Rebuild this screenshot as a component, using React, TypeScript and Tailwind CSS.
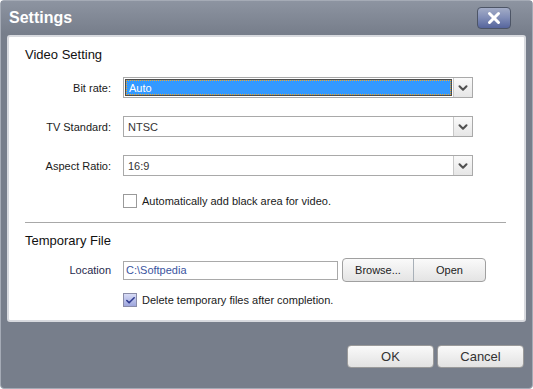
import { ChevronDown, X, Check } from 'lucide-react'

const font = { fontFamily: 'Tahoma, "Liberation Sans", "DejaVu Sans", sans-serif' }

function Combo({ value, focused }: { value: string; focused?: boolean }) {
  return (
    <div className="flex h-[21px] w-[350px] border border-[#a9a9a9] bg-white">
      <div className="flex flex-1 items-center p-[2px]">
        {focused ? (
          <div className="flex h-full w-full items-center border border-dotted border-[#f5a623] bg-[#3399ff] pl-[2px] text-white outline outline-1 outline-black/70">
            {value}
          </div>
        ) : (
          <div className="pl-[2px] text-[#333]">{value}</div>
        )}
      </div>
      <div className="flex w-[19px] items-center justify-center border-l border-[#c8c8c8] bg-gradient-to-b from-[#fafafa] to-[#e6e6e6]">
        <ChevronDown size={14} strokeWidth={3.5} className="text-[#505050]" />
      </div>
    </div>
  )
}

function Row({ label, children }: { label: string; children: React.ReactNode }) {
  return (
    <div className="flex items-center">
      <div className="w-[98px] pr-[12px] text-right text-[#1a1a1a]">{label}</div>
      {children}
    </div>
  )
}

function Box({ checked }: { checked?: boolean }) {
  return checked ? (
    <div className="flex h-[14px] w-[14px] items-center justify-center border border-[#8a8ca8] bg-gradient-to-b from-[#d8dcf6] to-[#9ea6dc]">
      <Check size={11} strokeWidth={3.5} className="text-[#2f3a8f]" />
    </div>
  ) : (
    <div className="h-[14px] w-[14px] border border-[#9a9a9a] bg-white" />
  )
}

export default function App() {
  return (
    <div className="h-[389px] w-[533px] text-[11px] leading-[14px]" style={font}>
      <div className="flex h-full w-full flex-col rounded-[4px] border border-[#a5abb6] bg-[#777e8b]">
        <div className="flex h-[34px] items-center justify-between bg-gradient-to-b from-[#8d94a1] to-[#767d8a] pl-[8px] pr-[21px]">
          <span className="text-[16px] font-bold leading-[20px] text-white">Settings</span>
          <div className="flex h-[22px] w-[34px] items-center justify-center rounded-[4px] border border-[#4d5566] bg-gradient-to-b from-[#a3acc6] via-[#7f8cb6] to-[#56659c]">
            <X size={18} strokeWidth={4} className="text-white" />
          </div>
        </div>
        <div className="mx-[6px] flex h-[287px] flex-col rounded-[3px] border-2 border-[#d8dadf] bg-white px-[16px] pt-[10px]">
          <div className="h-[16px] text-[13px] leading-[16px] text-[#111]">Video Setting</div>
          <div className="mt-[14px] flex flex-col gap-[18px]">
            <Row label="Bit rate:"><Combo value="Auto" focused /></Row>
            <Row label="TV Standard:"><Combo value="NTSC" /></Row>
            <Row label="Aspect Ratio:"><Combo value="16:9" /></Row>
          </div>
          <div className="ml-[98px] mt-[18px] flex h-[14px] items-center gap-[5px] text-[#1a1a1a]">
            <Box />
            <span>Automatically add black area for video.</span>
          </div>
          <div className="mt-[14px] h-px w-[481px] bg-[#a8a8a8]" />
          <div className="mt-[10px] h-[16px] text-[13px] leading-[16px] text-[#111]">Temporary File</div>
          <div className="mt-[9px] flex h-[24px] items-center">
            <div className="w-[98px] pr-[12px] text-right text-[#1f2a4d]">Location</div>
            <div className="flex h-[19px] w-[215px] items-center border border-[#a9a9a9] pl-[2px] text-[#3a55a0]">C:\Softpedia</div>
            <div className="ml-[4px] flex h-[24px] w-[144px] rounded-[4px] border border-[#a0a0a0] bg-gradient-to-b from-[#fafafa] to-[#e4e4e4] text-[#222]">
              <div className="flex w-[71px] items-center justify-center border-r border-[#a8b0b8]">Browse...</div>
              <div className="flex flex-1 items-center justify-center">Open</div>
            </div>
          </div>
          <div className="ml-[98px] mt-[11px] flex h-[14px] items-center gap-[5px] text-[#1a1a1a]">
            <Box checked />
            <span>Delete temporary files after completion.</span>
          </div>
        </div>
        <div className="mt-[23px] flex justify-end gap-[3px] pr-[8px]">
          <div className="flex h-[23px] w-[87px] items-center justify-center rounded-[4px] border border-[#9a9a9a] bg-gradient-to-b from-[#fafafa] to-[#e2e2e2] text-[13px] text-[#333]">OK</div>
          <div className="flex h-[23px] w-[87px] items-center justify-center rounded-[4px] border border-[#9a9a9a] bg-gradient-to-b from-[#fafafa] to-[#e2e2e2] text-[13px] text-[#333]">Cancel</div>
        </div>
      </div>
    </div>
  )
}
